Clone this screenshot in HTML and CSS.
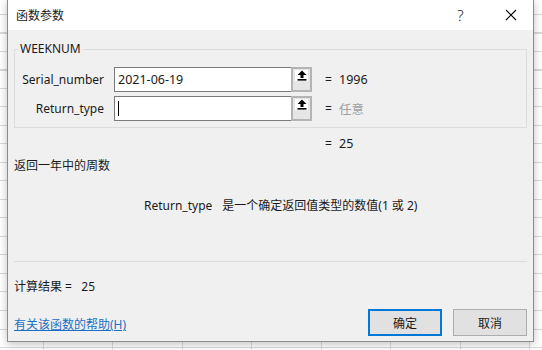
FILE: index.html
```html
<!DOCTYPE html>
<html lang="zh-CN">
<head>
  <meta charset="UTF-8" />
  <title>函数参数</title>
  <link rel="stylesheet" href="styles.css">
</head>
<body>
  <div class="dialog" role="dialog" aria-label="函数参数">
    <div class="titlebar">
      <span class="title">函数参数</span>
      <span class="title-btn help">?</span>
      <span class="title-btn" aria-label="关闭">
        <svg width="12" height="12" viewBox="0 0 12 12"><path d="M1 1 L11 11 M11 1 L1 11" stroke="#000" stroke-width="1.1" fill="none"/></svg>
      </span>
    </div>

    <div class="content">
      <fieldset class="args">
        <legend>WEEKNUM</legend>
        <div class="arg-row">
          <label class="arg-label">Serial_number</label>
          <div class="arg-input">2021-06-19</div>
          <span class="ref-btn">
            <span class="ref-icon">
              <svg width="12" height="11" viewBox="0 0 12 11"><path d="M6 0.5 L1.5 5 H4.5 V8 H7.5 V5 H10.5 Z" fill="#000"/><rect x="1.5" y="9" width="9" height="1.6" fill="#000"/></svg>
            </span>
          </span>
          <span class="eq">=</span>
          <span class="val">1996</span>
        </div>
        <div class="arg-row">
          <label class="arg-label">Return_type</label>
          <div class="arg-input"><span class="caret"></span></div>
          <span class="ref-btn">
            <span class="ref-icon">
              <svg width="12" height="11" viewBox="0 0 12 11"><path d="M6 0.5 L1.5 5 H4.5 V8 H7.5 V5 H10.5 Z" fill="#000"/><rect x="1.5" y="9" width="9" height="1.6" fill="#000"/></svg>
            </span>
          </span>
          <span class="eq">=</span>
          <span class="val muted">任意</span>
        </div>
      </fieldset>

      <div class="result-row">
        <span class="eq">=</span>
        <span class="val">25</span>
      </div>

      <p class="func-desc">返回一年中的周数</p>

      <p class="arg-desc">
        <span class="arg-name">Return_type</span>
        <span>是一个确定返回值类型的数值(1 或 2)</span>
      </p>

      <div class="divider"></div>

      <p class="calc">计算结果 =&nbsp;&nbsp; 25</p>

      <div class="footer">
        <a href="#" class="help-link">有关该函数的帮助(H)</a>
        <div class="buttons">
          <button type="button" class="btn primary">确定</button>
          <button type="button" class="btn">取消</button>
        </div>
      </div>
    </div>
  </div>
</body>
</html>
```

FILE: styles.css
```css
* {
  box-sizing: border-box;
}

body {
  margin: 0;
  width: 542px;
  height: 350px;
  overflow: hidden;
  font-family: "Noto Sans", "Noto Sans CJK SC", sans-serif;
  font-size: 12px;
  color: #1a1a1a;
  background-color: #fff;
  background-image:
    repeating-linear-gradient(to bottom, transparent 0, transparent 14px, #d9d9d9 14px, #d9d9d9 15px, transparent 15px, transparent 18.5px),
    repeating-linear-gradient(to right, transparent 0, transparent 43px, #d9d9d9 43px, #d9d9d9 44px, transparent 44px, transparent 69.5px);
}

.dialog {
  margin-left: 7px;
  width: 527px;
  height: 342px;
  background-color: #f0f0f0;
  border: 1px solid #8c8c8c;
  border-top: none;
  box-shadow: 0 2px 8px rgba(0,0,0,0.25);
}

.titlebar {
  height: 30px;
  background-color: #fff;
  display: flex;
  align-items: center;
  padding-left: 8px;
}

.title {
  flex: 1;
  font-size: 12px;
}

.title-btn {
  width: 45px;
  height: 30px;
  display: flex;
  align-items: center;
  justify-content: center;
  font-size: 14px;
}

.title-btn.help {
  margin-right: 5px;
  font-size: 15px;
  font-weight: 300;
}

.content {
  padding: 0 6px;
}

.args {
  margin: 11px 0 0;
  padding: 10px 0 6px;
  border: 1px solid #dcdcdc;
}

.args legend {
  margin-left: 3px;
  padding: 0 2px;
  line-height: 16px;
  font-size: 12px;
}

.arg-row {
  display: flex;
  align-items: center;
  height: 25px;
}

.arg-row + .arg-row {
  margin-top: 4px;
}

.arg-label {
  width: 89px;
  text-align: right;
  margin-right: 10px;
}

.arg-input {
  width: 177px;
  height: 25px;
  background-color: #fff;
  border: 1px solid #7a7a7a;
  border-right: none;
  display: flex;
  align-items: center;
  padding-left: 3px;
  font-size: 12.5px;
}

.caret {
  width: 1px;
  height: 15px;
  background-color: #000;
}

.ref-btn {
  width: 21px;
  height: 25px;
  background-color: #e6e6e6;
  border: 2px solid #b4b4b4;
  display: flex;
  align-items: flex-start;
  justify-content: center;
  padding-top: 1px;
}

.ref-icon {
  width: 13px;
  height: 11px;
  background-color: #fff;
  display: flex;
  align-items: center;
  justify-content: center;
}

.eq {
  width: 14px;
  margin-left: 13px;
}

.val {
  font-size: 12.5px;
}

.val.muted {
  color: #a0a0a0;
}

.result-row {
  display: flex;
  align-items: center;
  height: 16px;
  margin-top: 7px;
  padding-left: 298px;
}

.func-desc {
  margin: 7px 0 0;
  line-height: 16px;
}

.arg-desc {
  margin: 24px 0 0;
  line-height: 16px;
  padding-left: 130px;
  display: flex;
  gap: 10px;
}

.divider {
  height: 1px;
  margin-top: 47px;
  background-color: #dcdcdc;
}

.calc {
  margin: 17px 0 0;
  line-height: 16px;
}

.footer {
  margin-top: 14px;
  display: flex;
  align-items: flex-end;
  justify-content: space-between;
}

.help-link {
  color: #1a6fc4;
  text-decoration: underline;
  line-height: 16px;
  margin-bottom: 3px;
}

.buttons {
  display: flex;
  gap: 11px;
}

.btn {
  width: 74px;
  height: 27px;
  background-color: #e1e1e1;
  border: 1px solid #adadad;
  font-family: inherit;
  font-size: 12px;
  color: #1a1a1a;
  padding: 0;
}

.btn.primary {
  border: 2px solid #0078d7;
}
```
